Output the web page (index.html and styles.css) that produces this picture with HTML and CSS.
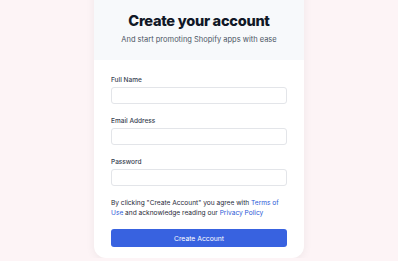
FILE: index.html
```html
<!DOCTYPE html>
<html lang="en">
<head>
  <meta charset="UTF-8">
  <meta name="viewport" content="width=device-width, initial-scale=1.0">
  <title>Create your account</title>
  <link rel="stylesheet" href="styles.css">
</head>
<body>

    <!-- Kartu pendaftaran -->
    <div class="card">

        <!-- Judul -->
        <div class="card-header">
            <h1>Create your account</h1>
            <p>And start promoting Shopify apps with ease</p>
        </div>

        <!-- Form -->
        <form class="card-body">
            <label for="fullName">Full Name</label>
            <input type="text" id="fullName" name="fullName">

            <label for="email">Email Address</label>
            <input type="email" id="email" name="email">

            <label for="password">Password</label>
            <input type="password" id="password" name="password">

            <p class="terms">
                By clicking "Create Account" you agree with <a href="#">Terms of Use</a> and acknowledge reading our <a href="#">Privacy Policy</a>
            </p>

            <button type="submit">Create Account</button>
        </form>

    </div>

</body>
</html>
```

FILE: styles.css
```css
body {
  margin: 0;
  font-family: Inter, "Noto Sans", sans-serif;
  background-color: #fdf4f6;
  color: #111827;
}

/* Kartu utama */
.card {
  width: 210px;
  margin: -14px auto 0;
  background-color: white;
  border-radius: 12px;
  box-shadow: 0 2px 10px rgba(0, 0, 0, 0.06);
  overflow: hidden;
}

.card-header {
  background-color: #f7f9fb;
  text-align: center;
  padding: 25px 6px 14px;
}

.card-header h1 {
  margin: 0;
  font-size: 14.6px;
  font-weight: 800;
  letter-spacing: -0.3px;
  line-height: 20px;
}

.card-header p {
  margin: 3px 0 0;
  font-size: 7.5px;
  line-height: 12px;
  color: #4b5563;
}

/* Isi form */
.card-body {
  display: flex;
  flex-direction: column;
  padding: 15px 17px 11px;
}

.card-body label {
  font-size: 6.5px;
  line-height: 10px;
  font-weight: 500;
  color: #374151;
  margin-bottom: 2px;
}

.card-body input {
  height: 17px;
  box-sizing: border-box;
  border: 1px solid #e3e5e9;
  border-radius: 3px;
  margin: 0 0 12px;
  padding: 0 6px;
}

.terms {
  margin: 0 0 11px;
  font-size: 6.6px;
  line-height: 10px;
  color: #1f2937;
}

.terms a {
  color: #2c5ad6;
  text-decoration: none;
}

.card-body button {
  height: 18px;
  border: none;
  border-radius: 3px;
  background-color: #3862e0;
  color: white;
  font-family: inherit;
  font-size: 6.8px;
  cursor: pointer;
}
```
